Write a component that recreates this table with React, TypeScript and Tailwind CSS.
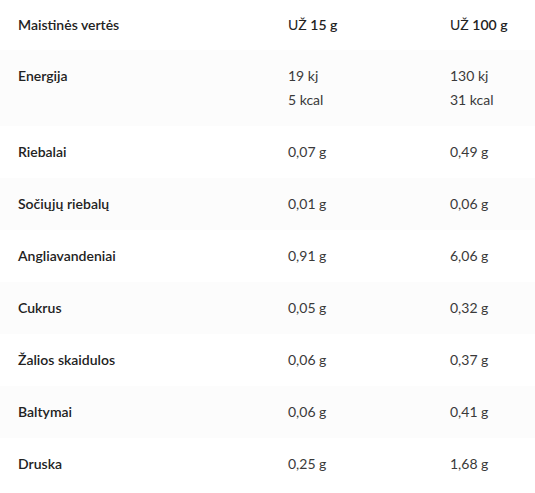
const rows: { label: string; a: string[]; b: string[] }[] = [
  { label: "Energija", a: ["19 kj", "5 kcal"], b: ["130 kj", "31 kcal"] },
  { label: "Riebalai", a: ["0,07 g"], b: ["0,49 g"] },
  { label: "Sočiųjų riebalų", a: ["0,01 g"], b: ["0,06 g"] },
  { label: "Angliavandeniai", a: ["0,91 g"], b: ["6,06 g"] },
  { label: "Cukrus", a: ["0,05 g"], b: ["0,32 g"] },
  { label: "Žalios skaidulos", a: ["0,06 g"], b: ["0,37 g"] },
  { label: "Baltymai", a: ["0,06 g"], b: ["0,41 g"] },
  { label: "Druska", a: ["0,25 g"], b: ["1,68 g"] },
];

export default function App() {
  return (
    <div className="w-[535px] bg-white font-['Lato','Open_Sans',sans-serif] text-[14px] leading-6">
      <div className="grid grid-cols-[270px_162px_1fr] px-[18px] py-[13px] text-[#222]">
        <div className="font-semibold">Maistinės vertės</div>
        <div>
          UŽ <span className="font-semibold">15 g</span>
        </div>
        <div>
          UŽ <span className="font-semibold">100 g</span>
        </div>
      </div>
      {rows.map((r, i) => (
        <div
          key={r.label}
          className={`grid grid-cols-[270px_162px_1fr] px-[18px] py-[14px] ${
            i % 2 === 0 ? "bg-[#fcfcfc]" : "bg-white"
          }`}
        >
          <div className="font-semibold text-[#222]">{r.label}</div>
          <div className="text-[#3a3a3a]">
            {r.a.map((v) => (
              <div key={v}>{v}</div>
            ))}
          </div>
          <div className="text-[#3a3a3a]">
            {r.b.map((v) => (
              <div key={v}>{v}</div>
            ))}
          </div>
        </div>
      ))}
    </div>
  );
}
